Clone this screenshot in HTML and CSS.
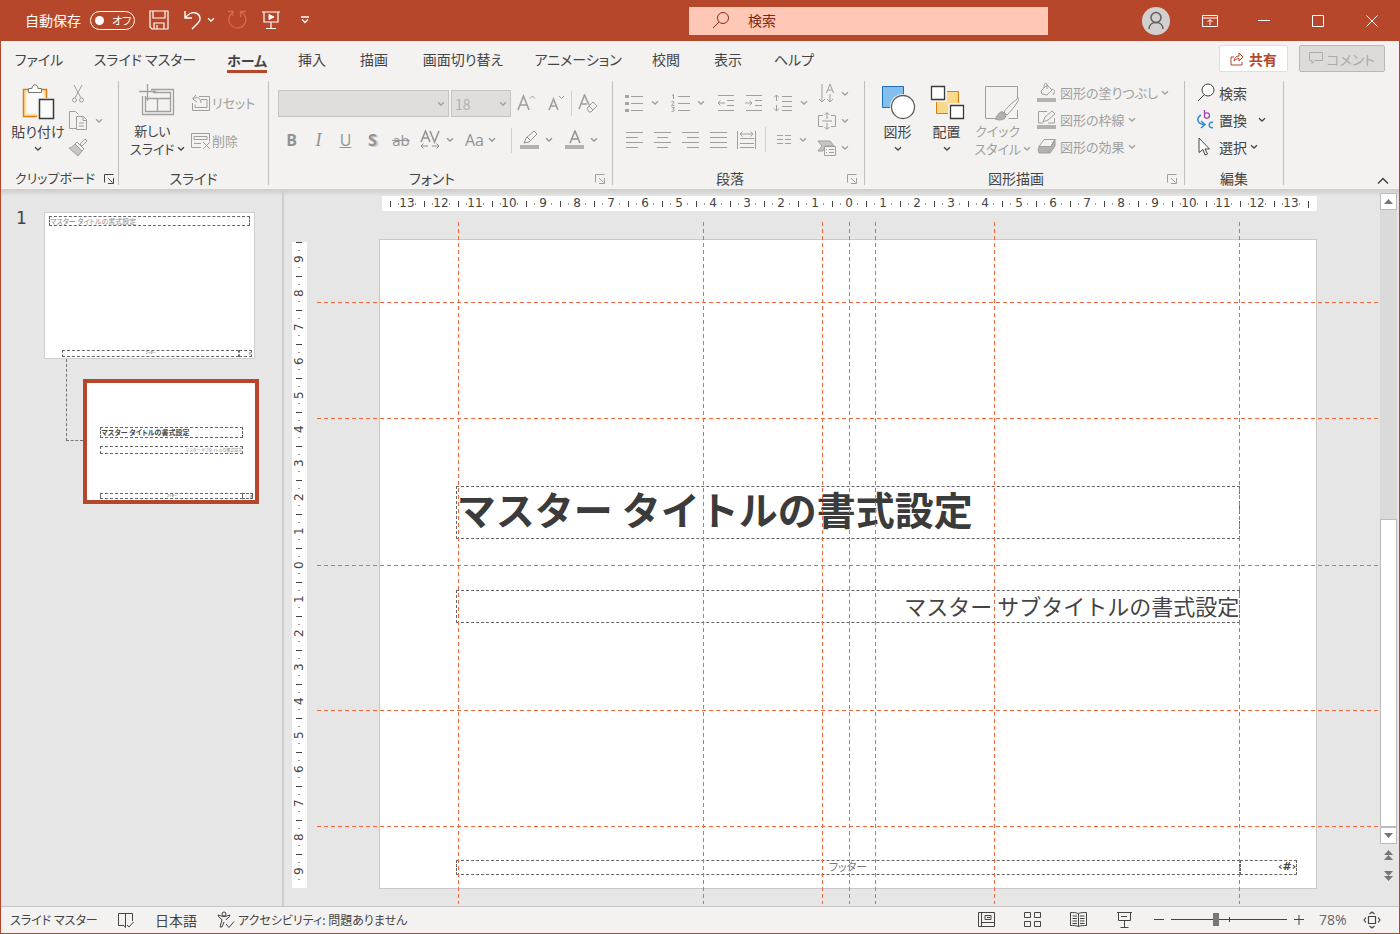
FILE: index.html
```html
<!DOCTYPE html>
<html lang="ja">
<head>
<meta charset="utf-8">
<meta name="viewport" content="width=device-width, initial-scale=1">
<title>スライド マスター</title>
<link rel="stylesheet" href="styles.css">
</head>
<body>
<svg class="defs" aria-hidden="true">
  <symbol id="chev" viewBox="0 0 8 6"><path d="M1 1.2l3 2.8 3-2.8" fill="none" stroke="currentColor" stroke-width="1.3"/></symbol>
  <symbol id="launch" viewBox="0 0 10 10"><path d="M.5 8.500v-8h9M4 4l4.500 4.500M9.500 4v5.500H4" fill="none" stroke="currentColor"/></symbol>
</svg>
<div class="window">
  <header class="titlebar">
    <div class="quick">
      <span class="quick-label" id="autosave">自動保存</span>
      <label class="toggle"><input type="checkbox" aria-labelledby="autosave"><span>オフ</span></label>
      <button class="tb save" aria-label="保存"><svg width="20" height="20" viewBox="0 0 20 20"><path d="M1 1h18v18H3l-2-2zM4 1v7h12V1M5 19v-6h10v6M8 19v-4" stroke-width="1.200"/></svg></button>
      <button class="tb undo" aria-label="元に戻す"><svg width="20" height="20" viewBox="0 0 20 20"><path d="M2 1v7h7M2 8C6 3 10 2 13 3c5 2 5 7 2 10l-6 6" stroke-width="1.400"/></svg></button>
      <button class="tb more" aria-label="元に戻す一覧"><svg width="8" height="6"><use href="#chev"/></svg></button>
      <button class="tb redo" aria-label="繰り返し"><svg width="20" height="20" viewBox="0 0 20 20"><path d="M13.500 7V1.500H19M14 2a8.500 8.500 0 1 1-9 1M1 1.500h5V6" stroke-width="1.300"/></svg></button>
      <button class="tb present" aria-label="最初から開始"><svg width="20" height="20" viewBox="0 0 20 20"><path d="M1 2h18M3 2v10h14V2M10 12v6M5 18.500h10" stroke-width="1.200"/><path d="M8 4.500l5 2.500-5 2.500z" fill="#fff"/></svg></button>
      <button class="tb custom" aria-label="クイック アクセス"><svg width="10" height="8" viewBox="0 0 10 8"><path d="M1 1h8M2 3.500l3 3 3-3" stroke-width="1.300"/></svg></button>
    </div>
    <label class="search"><svg width="18" height="18" viewBox="0 0 18 18"><circle cx="11" cy="7" r="5.500"/><path d="M7 11l-6 6"/></svg><input type="text" placeholder="検索" aria-label="検索"></label>
    <div class="sys">
      <button aria-label="アカウント"><svg width="28" height="28" viewBox="0 0 28 28"><circle cx="14" cy="14" r="14" fill="#d2d0ce" stroke="none"/><g stroke="#605e5c" stroke-width="1.5"><circle cx="14" cy="10.500" r="5"/><path d="M7 22c0-4 3-6.500 7-6.500s7 2.500 7 6.500"/></g></svg></button>
      <button aria-label="リボンの表示オプション"><svg width="16" height="12" viewBox="0 0 16 12"><path d="M.5.5h15v11H.5zM.5 3h15M8 10V5M5.500 7L8 4.500 10.500 7"/></svg></button>
      <button aria-label="最小化"><svg width="12" height="12"><path d="M0 5.500h12"/></svg></button>
      <button aria-label="最大化"><svg width="12" height="12"><path d="M.5.500h11v11H.5z"/></svg></button>
      <button aria-label="閉じる"><svg width="12" height="12"><path d="M.5.500l11 11M11.500.500l-11 11"/></svg></button>
    </div>
  </header>

  <div class="tabbar">
    <nav class="tabs">
      <button>ファイル</button><button>スライド マスター</button><button class="active"><span>ホーム</span></button><button>挿入</button><button>描画</button><button>画面切り替え</button><button>アニメーション</button><button>校閲</button><button>表示</button><button>ヘルプ</button>
    </nav>
    <div class="actions">
      <button class="share"><svg width="14" height="14" viewBox="0 0 14 14"><path d="M4 5H1v8h11v-3M4 9c.5-3 2-5 5-5V1l4 4-4 4V6.500C7 6.500 5.500 7.500 4 9z"/></svg>共有</button>
      <button class="comment" disabled><svg width="14" height="13" viewBox="0 0 14 13"><path d="M.5.500h13v8H6l-3 3v-3H.5z"/></svg>コメント</button>
    </div>
  </div>

  <div class="ribbon">
    <section class="group">
      <div class="body clip">
        <button class="big"><svg width="36" height="38" viewBox="0 0 36 38"><path d="M3.500 6.500h23v27h-23z" fill="#fce2ad" stroke="#e07b12" stroke-width="1.500"/><path d="M6.500 8.500h17v22h-17z" fill="#fafafa" stroke="none"/><path d="M8.500 9.500v-4h3.500c0-5 6-5 6 0h3.500v4z" fill="#fff" stroke="#797775"/><path d="M17 15h17v22H17z" fill="#f3f2f1" stroke="none"/><path d="M19.500 16.500h14v19h-14z" fill="#fafafa" stroke="#3b3a39" stroke-width="1.500"/></svg><span>貼り付け</span><svg class="chev" width="8" height="6"><use href="#chev"/></svg></button>
        <div class="small-col off">
          <button aria-label="切り取り"><svg width="20" height="20" viewBox="0 0 20 20"><path d="M6 1l7 13M14 1L7 14"/><circle cx="6.500" cy="16" r="2"/><circle cx="13.500" cy="16" r="2"/></svg></button>
          <button aria-label="コピー"><svg width="20" height="20" viewBox="0 0 20 20"><path d="M8 17.500H1.500V.500h6l3 3M8.500 5.500h7l3 3v10h-10zM15 5.500v4h4M11 12h5M11 15h5"/></svg><svg class="chev" width="8" height="6"><use href="#chev"/></svg></button>
          <button aria-label="書式のコピー"><svg width="20" height="20" viewBox="0 0 20 20"><path d="M17 1l2 2-5 5-2-2zM9 4l7 7-2 2-7-7z"/><path d="M7 6l7 7-4 5-9-8c2 0 4-2 6-4z" fill="#c8c6c4"/></svg></button>
        </div>
      </div>
      <footer><span>クリップボード</span><button aria-label="クリップボード オプション"><svg width="10" height="10"><use href="#launch"/></svg></button></footer>
    </section>

    <section class="group">
      <div class="body slides">
        <button class="big"><svg width="36" height="38" viewBox="0 0 36 38" class="gray"><path d="M12 6.500h22.500v25h-31V13M14 9.500h17.500v19h-25V13M18.500 15v13M7 15.500h24M8.500 1v17M0 8.500h17" stroke-width="1.300"/></svg><span>新しい<br>スライド</span><svg class="chev side" width="8" height="6"><use href="#chev"/></svg></button>
        <div class="slide-tools off">
          <button><svg width="20" height="18" viewBox="0 0 20 18"><path d="M8 2.500h10.500v14H1.500V9M10 5.500h6v8H4v-3M2 5c4-3 8-1 8 4M5 1L1.500 5 6 8"/></svg>リセット</button>
          <button><svg width="20" height="18" viewBox="0 0 20 18"><path d="M.5 1.500h18v8M.5 1.500v14H10M3 4.500h13v3H3zM3 11.500h7M12 10l7 7M19 10l-7 7"/></svg>削除</button>
        </div>
      </div>
      <footer><span>スライド</span></footer>
    </section>

    <section class="group">
      <div class="body font off">
        <div class="row">
          <div class="combo name"><select disabled aria-label="フォント"><option></option></select><svg width="8" height="6"><use href="#chev"/></svg></div>
          <div class="combo size"><select disabled aria-label="フォント サイズ"><option>18</option></select><svg width="8" height="6"><use href="#chev"/></svg></div>
          <button class="w30" aria-label="フォント サイズの拡大"><svg width="20" height="20" viewBox="0 0 20 20"><path d="M2 16L7.500 2 13 16M4 11h7" stroke-width="1.600"/><path d="M14 4.500L16.500 2 19 4.500"/></svg></button>
          <button class="w30" aria-label="フォント サイズの縮小"><svg width="20" height="20" viewBox="0 0 20 20"><path d="M3 16L7.500 5 12 16M5 12h5" stroke-width="1.600"/><path d="M13 2l2.500 2.500L18 2"/></svg></button>
          <i class="vsep"></i>
          <button class="w30" aria-label="書式のクリア"><svg width="20" height="20" viewBox="0 0 20 20"><path d="M2 15L7.500 1 12 11M4 10h6" stroke-width="1.600"/><path d="M10 14l6-6 4 4-6 6h-2zM12 12l4 4"/></svg></button>
        </div>
        <div class="row text">
          <button class="w27"><b>B</b></button><button class="w27"><i class="it">I</i></button><button class="w27"><u>U</u></button><button class="w27"><b class="shadow">S</b></button><button class="w30"><s>ab</s></button>
          <button class="w38 pair" aria-label="文字の間隔"><svg width="20" height="20" viewBox="0 0 20 20"><path d="M1 12L5.500 1 10 12M3 8h5M10 1l4.500 11L19 1" stroke-width="1.500"/><path d="M1 16h7M12 16h7M3.500 13.500L1 16l2.500 2.500M16.500 13.500L19 16l-2.500 2.500"/></svg><svg class="chev" width="8" height="6"><use href="#chev"/></svg></button>
          <button class="aa"><span>Aa</span><svg class="chev" width="8" height="6"><use href="#chev"/></svg></button>
          <i class="vsep"></i>
          <button class="mark" aria-label="蛍光ペン"><svg width="20" height="20" viewBox="0 0 20 20"><path d="M4 13l2-5 8-7 3 3-8 8-5 1zM7 7l4 4"/><path d="M0 15h19v4H0z" fill="#b3b0ad" stroke="none"/></svg><svg class="chev" width="8" height="6"><use href="#chev"/></svg></button>
          <button class="mark" aria-label="フォントの色"><svg width="20" height="20" viewBox="0 0 20 20"><path d="M5 13l5-12 5 12M6.500 9h7" stroke-width="1.500"/><path d="M0 15h19v4H0z" fill="#b3b0ad" stroke="none"/></svg><svg class="chev" width="8" height="6"><use href="#chev"/></svg></button>
        </div>
      </div>
      <footer><span>フォント</span><button class="off" aria-label="フォント オプション"><svg width="10" height="10"><use href="#launch"/></svg></button></footer>
    </section>

    <section class="group">
      <div class="body para off">
        <div class="para-main">
          <div class="row">
            <button class="w46" aria-label="箇条書き"><svg width="19" height="18" viewBox="0 0 19 18"><path d="M6 2.500h12M6 9.500h12M6 16.500h12"/><path d="M0 1h4v3H0zM0 8h4v3H0zM0 15h4v3H0z" fill="#a6a4a2" stroke="none"/></svg><svg class="chev" width="8" height="6"><use href="#chev"/></svg></button>
            <button class="w46" aria-label="段落番号"><svg width="19" height="18" viewBox="0 0 19 18"><path d="M7 2.500h12M7 9.500h12M7 16.500h12M1 1.500l1.500-1V5M.5 7.500c3-1 3 1 0 4h3M.5 13.500h3L2 15.500c2 0 2 2-1.500 2"/></svg><svg class="chev" width="8" height="6"><use href="#chev"/></svg></button>
            <button class="w28" aria-label="インデントを減らす"><svg width="18" height="18" viewBox="0 0 18 18"><path d="M1 1.500h16M10 6.500h7M10 11.500h7M1 16.500h16M1 9h7M3.500 6.500L1 9l2.500 2.500"/></svg></button>
            <button class="w28" aria-label="インデントを増やす"><svg width="18" height="18" viewBox="0 0 18 18"><path d="M1 1.500h16M10 6.500h7M10 11.500h7M1 16.500h16M0 9h7M4.500 6.500L7 9l-2.500 2.500"/></svg></button>
            <button class="w32" aria-label="行間"><svg width="20" height="18" viewBox="0 0 20 18"><path d="M9 2.500h10M9 7.500h10M9 12.500h10M9 16.500h10M3.500 1v6M1 3.500L3.500 1 6 3.500M3.500 11v6M1 14.500L3.500 17 6 14.500"/></svg><svg class="chev" width="8" height="6"><use href="#chev"/></svg></button>
          </div>
          <div class="row">
            <button class="w28" aria-label="左揃え"><svg width="18" height="16"><path d="M1 .5h17M1 5.500h12M1 10.500h17M1 15.500h12"/></svg></button>
            <button class="w28" aria-label="中央揃え"><svg width="18" height="16"><path d="M1 .5h17M4 5.500h11M1 10.500h17M4 15.500h11"/></svg></button>
            <button class="w28" aria-label="右揃え"><svg width="18" height="16"><path d="M1 .5h17M6 5.500h12M1 10.500h17M6 15.500h12"/></svg></button>
            <button class="w28" aria-label="両端揃え"><svg width="18" height="16"><path d="M1 .5h17M1 5.500h17M1 10.500h17M1 15.500h17"/></svg></button>
            <button class="w28" aria-label="均等割り付け"><svg width="20" height="20" viewBox="0 0 20 20"><path d="M.5 1v18M18.500 1v18M3 8.500h14M3 13.500h14M3 17.500h14M3 4h13M5.500 1.500L3 4l2.500 2.500M13.500 1.500L16 4l-2.500 2.500"/></svg></button>
            <i class="vsep"></i>
            <button class="w32" aria-label="段組み"><svg width="16" height="12"><path d="M1 1.500h6M9 1.500h6M1 5.500h6M9 5.500h6M1 9.500h6M9 9.500h6"/></svg><svg class="chev" width="8" height="6"><use href="#chev"/></svg></button>
          </div>
        </div>
        <div class="small-col">
          <button aria-label="文字列の方向"><svg width="20" height="20" viewBox="0 0 20 20"><path d="M5 0v18M2 15l3 3 3-3M13 10v8M10 15l3 3 3-3M9.500 9L13 0l3.500 9M11 6h4"/></svg><svg class="chev" width="8" height="6"><use href="#chev"/></svg></button>
          <button aria-label="文字の配置"><svg width="20" height="20" viewBox="0 0 20 20"><path d="M6 4.500H1.500v11H6M14 4.500h4.500v11H14M5 10h10M10 8V2M7.500 4L10 1.500 12.500 4M10 12v6M7.500 16l2.500 2.500 2.500-2.500"/></svg><svg class="chev" width="8" height="6"><use href="#chev"/></svg></button>
          <button aria-label="SmartArt に変換"><svg width="20" height="20" viewBox="0 0 20 20"><path d="M1 3h12l4 5H8l-2 5H1l4-5z" fill="#c8c6c4"/><path d="M7.500 8.500h11v9h-11z" fill="#f3f2f1"/><path d="M9 11.500h1M12 11.500h5M9 14.500h1M12 14.500h5"/></svg><svg class="chev" width="8" height="6"><use href="#chev"/></svg></button>
        </div>
      </div>
      <footer><span>段落</span><button class="off" aria-label="段落オプション"><svg width="10" height="10"><use href="#launch"/></svg></button></footer>
    </section>

    <section class="group">
      <div class="body draw">
        <button class="big w48"><svg width="36" height="38" viewBox="0 0 36 38"><path d="M2.500 3.500h21v21h-21z" fill="#83beec" stroke="#1e6fb9"/><circle cx="23" cy="24" r="13" fill="#f3f2f1" stroke="none"/><circle cx="23" cy="24" r="11.500" fill="#fff" stroke="#605e5c" stroke-width="1.300"/></svg><span>図形</span><svg class="chev" width="8" height="6"><use href="#chev"/></svg></button>
        <button class="big w48"><svg width="36" height="38" viewBox="0 0 36 38"><path d="M7.500 8.500h22v22h-22z" fill="#fbd98b" stroke="#e07b12"/><path d="M0 1h18v18H0zM19 20h17v17H19z" fill="#f3f2f1" stroke="none"/><path d="M2.500 3.500h13v13h-13zM21.500 22.500h13v13h-13z" fill="#fff" stroke="#3b3a39" stroke-width="1.300"/></svg><span>配置</span><svg class="chev" width="8" height="6"><use href="#chev"/></svg></button>
        <button class="big w60 off"><svg width="36" height="38" viewBox="0 0 36 38"><path d="M13 35.500H2.500v-32h32V15M34.500 27v8.500h-9" stroke="#a19f9d"/><path d="M37 14c-6 4-13 10-16 15l3 3c5-5 10-11 13-18z" fill="#f3f2f1"/><path d="M20 29c-4-1-5 3-8 7 5 2 11 1 11-4z" fill="#b3b0ad"/></svg><span>クイック<br>スタイル</span><svg class="chev side" width="8" height="6"><use href="#chev"/></svg></button>
        <div class="small-col off effects">
          <button><svg width="20" height="20" viewBox="0 0 20 20"><path d="M4 8l6-6 5 5-5 5-5-1zM10 6V1c-2-2-3 0-3 4M15 6c3 1 3 3 1 6"/><path d="M0 15h19v4H0z" fill="#b3b0ad" stroke="none"/></svg>図形の塗りつぶし<svg class="chev" width="8" height="6"><use href="#chev"/></svg></button>
          <button><svg width="20" height="20" viewBox="0 0 20 20"><path d="M10 1.500H1.500V13H6M17.500 8v5H11M6 12l2-5 7-6 3 3-7 6z"/><path d="M0 15h19v4H0z" fill="#b3b0ad" stroke="none"/></svg>図形の枠線<svg class="chev" width="8" height="6"><use href="#chev"/></svg></button>
          <button><svg width="20" height="20" viewBox="0 0 20 20"><path d="M7 2.500h11l-4 7H2z" fill="#f3f2f1"/><path d="M18 2.500V9l-5 7H2c-1-2-1-4 0-6.500h12z" fill="#b3b0ad"/><path d="M2 9.500h12l4-7"/></svg>図形の効果<svg class="chev" width="8" height="6"><use href="#chev"/></svg></button>
        </div>
      </div>
      <footer><span>図形描画</span><button class="off" aria-label="図形描画オプション"><svg width="10" height="10"><use href="#launch"/></svg></button></footer>
    </section>

    <section class="group">
      <div class="body small-col edit">
        <button><svg width="20" height="20" viewBox="0 0 20 20"><circle cx="12" cy="7" r="6" fill="#fafafa"/><path d="M8 12l-6 6"/></svg>検索</button>
        <button class="gapped"><svg width="20" height="20" viewBox="0 0 20 20"><path d="M5 5C0 8 1 14 8 14.500M5 11l4 3.500L5 18" stroke="#2b88d8" stroke-width="1.500"/><path d="M8.500 0v8M8.500 5c0-3 5-3 5 .5S8.500 9 8.500 6" stroke="#a33fb5" stroke-width="1.300"/><path d="M17 12.500c-5-2-5 7 0 5" stroke="#2b88d8" stroke-width="1.500"/></svg>置換<svg class="chev" width="8" height="6"><use href="#chev"/></svg></button>
        <button><svg width="20" height="20" viewBox="0 0 20 20"><path d="M3 1v14.500l4-3 2 5.500 2.500-1-2.500-5h4.500z" fill="#fff"/></svg>選択<svg class="chev" width="8" height="6"><use href="#chev"/></svg></button>
      </div>
      <footer><span>編集</span></footer>
    </section>
    <div class="collapse"><button aria-label="リボンを折りたたむ"><svg width="12" height="8" viewBox="0 0 12 8"><path d="M1 6.500l5-5 5 5" stroke-width="1.500"/></svg></button></div>
  </div>

  <main class="workspace">
    <aside class="pane">
      <div class="master">
        <span class="num">1</span>
        <div class="thumb first"><span class="ph t-title">マスター タイトルの書式設定</span><span class="ph t-foot">フッター</span><span class="ph t-num">#</span></div>
      </div>
      <div class="layout-row">
        <i class="connector"></i>
        <div class="thumb second"><span class="ph t-title">マスター タイトルの書式設定</span><span class="ph t-sub">マスター サブタイトルの書式設定</span><span class="ph t-foot">フッター</span><span class="ph t-num">#</span></div>
      </div>
    </aside>

    <section class="editor">
      <div class="hruler"><span>13</span><span>12</span><span>11</span><span>10</span><span>9</span><span>8</span><span>7</span><span>6</span><span>5</span><span>4</span><span>3</span><span>2</span><span>1</span><span>0</span><span>1</span><span>2</span><span>3</span><span>4</span><span>5</span><span>6</span><span>7</span><span>8</span><span>9</span><span>10</span><span>11</span><span>12</span><span>13</span></div>
      <div class="vruler"><span>9</span><span>8</span><span>7</span><span>6</span><span>5</span><span>4</span><span>3</span><span>2</span><span>1</span><span>0</span><span>1</span><span>2</span><span>3</span><span>4</span><span>5</span><span>6</span><span>7</span><span>8</span><span>9</span></div>
      <div class="canvas">
        <article class="slide">
          <h1 class="ph title">マスター タイトルの書式設定</h1>
          <p class="ph subtitle">マスター サブタイトルの書式設定</p>
          <p class="ph foot">フッター</p>
          <p class="ph pageno">‹#›</p>
        </article>
        <svg class="guides" width="100%" height="100%" aria-hidden="true">
          <line x1="13.3%" x2="13.3%" y1="0" y2="100%"/>
          <line x1="36.4%" x2="36.4%" y1="0" y2="100%"/>
          <line x1="47.6%" x2="47.6%" y1="0" y2="100%"/>
          <line x1="50.1%" x2="50.1%" y1="0" y2="100%"/>
          <line x1="52.6%" x2="52.6%" y1="0" y2="100%"/>
          <line x1="63.8%" x2="63.8%" y1="0" y2="100%"/>
          <line x1="86.9%" x2="86.9%" y1="0" y2="100%"/>
          <line x1="0" x2="100%" y1="11.8%" y2="11.8%"/>
          <line x1="0" x2="100%" y1="28.8%" y2="28.8%"/>
          <line x1="0" x2="100%" y1="50.3%" y2="50.3%"/>
          <line x1="0" x2="100%" y1="71.7%" y2="71.7%"/>
          <line x1="0" x2="100%" y1="88.6%" y2="88.6%"/>
        </svg>
      </div>
      <div class="scroll">
        <button class="arrow" aria-label="上へ"><svg width="9" height="5"><path d="M0 5l4.500-5L9 5z"/></svg></button>
        <div class="track"><div class="knob"></div></div>
        <button class="arrow" aria-label="下へ"><svg width="9" height="5"><path d="M0 0l4.500 5L9 0z"/></svg></button>
        <button class="page" aria-label="前のスライド"><svg width="9" height="10"><path d="M0 5l4.500-5L9 5zM0 10l4.500-5L9 10z"/></svg></button>
        <button class="page" aria-label="次のスライド"><svg width="9" height="10"><path d="M0 0l4.500 5L9 0zM0 5l4.500 5L9 5z"/></svg></button>
      </div>
    </section>
  </main>

  <footer class="status">
    <div class="status-left">
      <span class="mode">スライド マスター</span>
      <svg class="book" width="18" height="18" viewBox="0 0 18 18"><path d="M8.500 4V2.500h-7v12H7l1.500 2V2.500h7V10M10 14l2 2 4.500-5"/></svg>
      <span class="lang">日本語</span>
      <svg class="access" width="18" height="18" viewBox="0 0 18 18"><circle cx="7" cy="3" r="2"/><path d="M1 4c0 3 4 3 4 5L3 16M13 4c0 3-4 3-4 5M3 16h2l2-5M1 4l5 1.500h2L13 4M9 13l3 3.500 5-6"/></svg>
      <span>アクセシビリティ: 問題ありません</span>
    </div>
    <div class="status-right">
      <button aria-label="標準"><svg width="17" height="15" viewBox="0 0 17 15"><path d="M.5.500h16v14H.5zM3.500.500v14M3.500 10.500h13M7 3.500h6v4H7zM9 5.500h3"/></svg></button>
      <button aria-label="スライド一覧"><svg width="17" height="15" viewBox="0 0 17 15"><path d="M.5.500h6v5h-6zM10.500.500h6v5h-6zM.5 9.500h6v5h-6zM10.500 9.500h6v5h-6z"/></svg></button>
      <button aria-label="閲覧表示"><svg width="17" height="15" viewBox="0 0 17 15"><path d="M8.500 2v12.500M8.500 1.500C6 .5 3 .5.500.500v13c3 0 6 0 8 1 2-1 5-1 8-1V.500c-3 0-6 0-8 1zM2.500 4H7M2.500 6.500H7M2.500 9H7M2.500 11.500H7M10 4h4.500M10 6.500h4.500M10 9h4.500M10 11.500h4.500"/></svg></button>
      <button aria-label="スライド ショー"><svg width="17" height="16" viewBox="0 0 17 16"><path d="M1 .5h15M2.500.500v8h12v-8M5 4.500h6M8.500 9v6M4.500 15.500h8"/></svg></button>
      <button class="zoom-step" aria-label="縮小"><svg width="10" height="10"><path d="M0 4.500h10"/></svg></button>
      <input class="zoom" type="range" min="0" max="100" value="38" aria-label="ズーム">
      <button class="zoom-step" aria-label="拡大"><svg width="10" height="10"><path d="M0 4.500h10M5 0v10"/></svg></button>
      <span class="pct">78%</span>
      <button class="fit" aria-label="ウィンドウに合わせる"><svg width="18" height="18" viewBox="0 0 18 18"><path d="M5.500 5.500h7v7h-7zM6.500 3L9 1l2.500 2M6.500 15L9 17l2.500-2M3 6.500L1 9l2 2.500M15 6.500L17 9l-2 2.500" stroke-width="1.200"/></svg></button>
    </div>
  </footer>
</div>
</body>
</html>
```

FILE: styles.css
```css
* { box-sizing: border-box; }

body {
  margin: 0;
  background: #f3f2f1;
  color: #444;
  font: 14px/18px "Noto Sans CJK JP", sans-serif;
  font-feature-settings: "palt";
}

button, input, select {
  font: inherit;
  font-feature-settings: inherit;
  color: inherit;
}

button {
  border: 0;
  padding: 0;
  background: none;
  display: flex;
  align-items: center;
  white-space: nowrap;
}

svg { fill: none; stroke: currentColor; flex: none; }
.defs { display: none; }

.window {
  min-height: 100vh;
  display: flex;
  flex-direction: column;
  border: solid #b7472a;
  border-width: 0 1px 1px;
}

/* title bar */
.titlebar {
  height: 41px;
  background: #b7472a;
  color: #fff;
  display: grid;
  grid-template-columns: 688px minmax(200px, 359px) 1fr;
  align-items: center;
}
.quick { display: flex; align-items: center; padding: 0 0 1px 24px; }
.quick-label { width: 65px; white-space: nowrap; }
.toggle {
  width: 45px;
  height: 19px;
  border: 1px solid #fff;
  border-radius: 10px;
  display: flex;
  align-items: center;
  gap: 8px;
  padding-left: 4px;
  font-size: 11px;
  line-height: 16px;
}
.toggle input {
  appearance: none;
  margin: 0;
  width: 9px;
  height: 9px;
  border-radius: 50%;
  background: #fff;
}
.save { margin-left: 14px; }
.undo { margin-left: 14px; }
.more { margin-left: 4px; }
.redo { margin-left: 12px; color: #e0674a; }
.present { margin-left: 14px; }
.custom { margin-left: 19px; }
.search {
  height: 28px;
  background: #ffc8b6;
  color: #8c2a11;
  display: flex;
  align-items: center;
  gap: 18px;
  padding: 0 0 2px 23px;
}
.search input {
  flex: 1;
  min-width: 0;
  border: 0;
  padding: 0;
  background: none;
}
.search input::placeholder { color: #7c2a14; opacity: 1; }
.sys { display: flex; justify-content: flex-end; }
.sys button { width: 54px; height: 40px; justify-content: center; }

/* tabs */
.tabbar { height: 37px; display: flex; justify-content: space-between; }
.tabs {
  display: grid;
  grid-template-columns: 76px 136px 68px 62px 62px 116px 114px 62px 62px 70px;
}
.tabs button { justify-content: center; padding-bottom: 2px; }
.tabs .active { font-weight: 700; }
.tabs .active span { border-bottom: 3px solid #b7472a; padding: 6px 0 1px; }
.actions { display: flex; align-items: flex-start; gap: 11px; padding: 4px 14px 0 0; }
.actions button {
  height: 27px;
  justify-content: center;
  gap: 5px;
  border: 1px solid #e1dfdd;
  border-radius: 2px;
}
.share { width: 69px; background: #fff; color: #b7472a; font-weight: 700; }
.actions .comment { width: 86px; gap: 3px; background: #dcdbda; border-color: #bab8b6; color: #adabaa; }

/* ribbon */
.ribbon {
  display: grid;
  grid-template-columns: 118px 150px 344px 252px 320px 99px 1fr;
  padding: 3px 0 4px;
  border-bottom: 1px solid #d0cecc;
}
.group { border-right: 1px solid #c0bebc; }
.body { height: 81px; display: flex; }
.group footer {
  height: 23px;
  padding-top: 10px;
  line-height: 12px;
  display: flex;
}
.group footer span { flex: 1; text-align: center; white-space: nowrap; }
.group footer button { width: 17px; height: 13px; }
.group:first-child footer { padding-left: 5px; font-size: 13px; }
.group:first-child footer button { width: 14px; }
.off { color: #a19f9d; }
.gray { color: #a19f9d; }

.big {
  display: grid;
  grid-template-columns: 1fr;
  grid-template-rows: 41px;
  grid-auto-rows: 18px;
  align-items: center;
  justify-items: center;
  align-content: start;
}
.big span { align-self: start; text-align: center; }
.big > svg:first-child { align-self: center; }
.big .side { justify-self: end; grid-row: 3; grid-column: 1; }
.big:has(.side) span { grid-row: 2 / span 2; grid-column: 1; font-size: 13px; padding-right: 10px; justify-self: end; }

.small-col { display: grid; grid-template-rows: repeat(3, 27px); }
.small-col button { gap: 7px; padding-bottom: 1px; }
.clip .big { width: 60px; margin-left: 7px; }
.slides .big { width: 53px; margin-left: 11px; }
.slide-tools { display: grid; grid-template-rows: 38px 38px; margin: 3px 0 0 8px; font-size: 13px; }
.slide-tools button { gap: 1px; }

.row { display: flex; height: 27px; align-items: center; }
.row button { height: 27px; }
.font { flex-direction: column; gap: 10px; padding: 9px 0 0 9px; }
.combo {
  display: grid;
  align-items: center;
  height: 27px;
  background: #dfdedd;
  border: 1px solid #c6c4c2;
  margin-right: 2px;
}
.combo > * { grid-area: 1 / 1; }
.combo svg { justify-self: end; margin-right: 3px; }
.combo select {
  appearance: none;
  border: 0;
  background: none;
  width: 100%;
  padding: 0 3px;
  color: #b3b0ad;
  opacity: 1;
}
.combo.name { width: 171px; }
.combo.size { width: 60px; margin-right: 0; }
.w27 { width: 27px; justify-content: center; }
.w28 { width: 28px; }
.w30 { width: 30px; justify-content: center; }
.w32 { width: 32px; }
.w38 { width: 38px; }
.w46 { width: 46px; }
.w48 { width: 49px; }
.w60 { width: 60px; }
.vsep { width: 1px; height: 25px; background: #d2d0ce; }
.text { color: #949290; font-size: 16px; font-family: "Open Sans", "Noto Sans CJK JP", sans-serif; }
.text button { padding-bottom: 2px; }
.it { font: italic 18px/20px "Liberation Serif", serif; }
.shadow { text-shadow: 2px 1px 1px #c8c6c4; }
.text s { font-size: 15px; }
.pair { gap: 6px; margin-left: 4px; }
.aa { width: 46px; gap: 4px; margin-left: 7px; }
.mark { width: 37px; gap: 5px; margin-left: 8px; }

.para { padding-left: 12px; gap: 6px; }
.para-main { display: grid; grid-template-rows: 27px 27px; gap: 10px; align-content: start; padding-top: 8px; width: 186px; }
.para .row button { gap: 7px; }
.para .w32 { gap: 6px; }
.para .vsep { margin-right: 10px; }
.para .row .w28 { justify-content: flex-start; }
.para .small-col button { gap: 4px; }

.draw { padding-left: 8px; }
.effects { margin-left: 6px; font-size: 13px; }
.effects button { gap: 3px; padding-bottom: 3px; }
.edit { padding-left: 11px; }
.edit button { gap: 3px; padding-bottom: 3px; }
.edit .gapped .chev { margin-left: 8px; }
.collapse { display: flex; justify-content: flex-end; align-items: flex-end; padding-right: 10px; }

/* workspace */
.workspace {
  flex: 1;
  display: grid;
  grid-template-columns: 283px 1fr;
  background: linear-gradient(#cfcecd, #e6e6e6 6px);
}
.pane { border-right: 2px solid #cfcfcf; padding-top: 21px; margin-top: 1px; }
.master { display: flex; }
.num { width: 43px; padding-left: 15px; font: 17px/12px "DejaVu Sans", sans-serif; }
.thumb { position: relative; background: #fff; overflow: hidden; }
.first { width: 211px; height: 147px; border: 1px solid #cfcfcf; }
.layout-row { display: flex; padding-left: 65px; }
.connector { width: 17px; height: 82px; border: dashed #777; border-width: 0 0 1px 1px; }
.second { width: 176px; height: 125px; margin-top: 20px; border: 4px solid #b7472a; }
.ph { position: absolute; margin: 0; border: 1px dashed #666; white-space: nowrap; }
.thumb .ph { line-height: 8px; }
.first .t-title { left: 2%; right: 2%; top: 2%; height: 10px; font-size: 7px; color: #888; }
.first .t-foot { left: 8%; right: 7%; bottom: 1%; height: 7px; font-size: 3px; line-height: 5px; text-align: center; }
.first .t-num { right: 1%; width: 6%; bottom: 1%; height: 7px; font-size: 4px; line-height: 5px; text-align: right; }
.second .t-title { left: 8%; right: 7%; top: 38%; height: 11px; font-size: 7px; font-weight: 700; }
.second .t-sub { left: 8%; right: 7%; top: 54%; height: 8px; font-size: 4px; line-height: 6px; text-align: right; color: #888; }
.second .t-foot { left: 8%; right: 7%; bottom: 1%; height: 6px; font-size: 3px; line-height: 4px; text-align: center; }
.second .t-num { right: 1%; width: 7%; bottom: 1%; height: 6px; font-size: 4px; line-height: 4px; text-align: right; }

.editor {
  display: grid;
  grid-template-columns: 33px 1fr 20px;
  grid-template-rows: 32px 1fr;
  padding-bottom: 2px;
}
.hruler {
  grid-column: 2;
  margin: 6px 62px 11px 65px;
  padding: 0 8px;
  display: flex;
  background: #fff;
}
.vruler {
  grid-row: 2;
  margin: 20px 10px 16px 8px;
  display: flex;
  flex-direction: column;
  background: #fff;
}
.hruler span, .vruler span {
  flex: 1;
  display: flex;
  align-items: center;
  justify-content: center;
  font: 12px/15px "DejaVu Sans", sans-serif;
}
.hruler span {
  background:
    linear-gradient(#444, #444) 0 50% / 1px 6px no-repeat,
    linear-gradient(#999, #999) 25% 50% / 1px 2px no-repeat,
    linear-gradient(#999, #999) 77% 50% / 1px 2px no-repeat;
}
.hruler span:last-child { border-right: 1px solid transparent; border-image: linear-gradient(transparent 5px, #444 5px, #444 11px, transparent 11px) 1; }
.vruler span {
  writing-mode: vertical-rl;
  rotate: 180deg;
  background:
    linear-gradient(#444, #444) 50% 100% / 6px 1px no-repeat,
    linear-gradient(#999, #999) 50% 25% / 2px 1px no-repeat,
    linear-gradient(#999, #999) 50% 77% / 2px 1px no-repeat;
}

.canvas { grid-row: 2; grid-column: 2; position: relative; display: grid; padding: 17px 62px 15px 62px; }
.slide { position: relative; background: #fff; border: 1px solid #c8c8c8; }
.title { left: 8.1%; right: 8.1%; top: 38%; height: 53px; font-size: 39px; line-height: 42px; font-weight: 700; color: #3b3b3b; }
.subtitle { left: 8.1%; right: 8.1%; top: 54%; height: 33px; font-size: 22px; line-height: 28px; text-align: right; }
.title, .subtitle { font-feature-settings: normal; }
.foot { left: 8.1%; right: 8.1%; bottom: 2%; height: 15px; font-size: 11px; line-height: 11px; text-align: center; color: #777; }
.pageno { left: 91.9%; right: 2%; bottom: 2%; height: 15px; font: 700 11px/12px "DejaVu Sans", sans-serif; text-align: right; }

.guides { position: absolute; inset: 0; }
.guides line {
  stroke: #f2683c;
  stroke-width: 1px;
  stroke-dasharray: 4 3;
  shape-rendering: crispEdges;
}

.scroll {
  grid-row: 1 / 3;
  grid-column: 3;
  display: flex;
  flex-direction: column;
  padding: 3px 2px 18px 1px;
}
.scroll svg { fill: #777; stroke: none; }
.scroll button { justify-content: center; }
.arrow { height: 17px; background: #fff; border: 1px solid #bbb; }
.track { flex: 1; background: #dadada; display: flex; flex-direction: column; justify-content: flex-end; }
.knob { height: 50%; background: #fff; border: 1px solid #bbb; }
.page { height: 21px; }

/* status bar */
.status {
  height: 27px;
  border-top: 1px solid #c8c6c4;
  display: flex;
  justify-content: space-between;
  align-items: center;
  font-size: 12px;
}
.status-left, .status-right { display: flex; align-items: center; padding-bottom: 1px; }
.status-left { padding-left: 9px; }
.mode { width: 107px; }
.lang { width: 62px; font-size: 14px; }
.book { margin-right: 20px; }
.access { margin-right: 3px; }
.status-right { padding-right: 18px; }
.status-right button { width: 46px; justify-content: center; }
.status-right .zoom-step { width: 24px; }
.zoom { appearance: none; width: 116px; height: 13px; margin: 0; background:
  linear-gradient(#444, #444) 50% 50% / 1px 5px no-repeat,
  linear-gradient(#444, #444) 0 50% / 100% 1px no-repeat; }
.zoom::-webkit-slider-thumb { appearance: none; width: 6px; height: 13px; background: #777; }
.pct { width: 44px; padding-left: 8px; font: 14px/18px "Open Sans", sans-serif; color: #666; }
.status-right .fit { width: 18px; margin-left: 8px; }
```
